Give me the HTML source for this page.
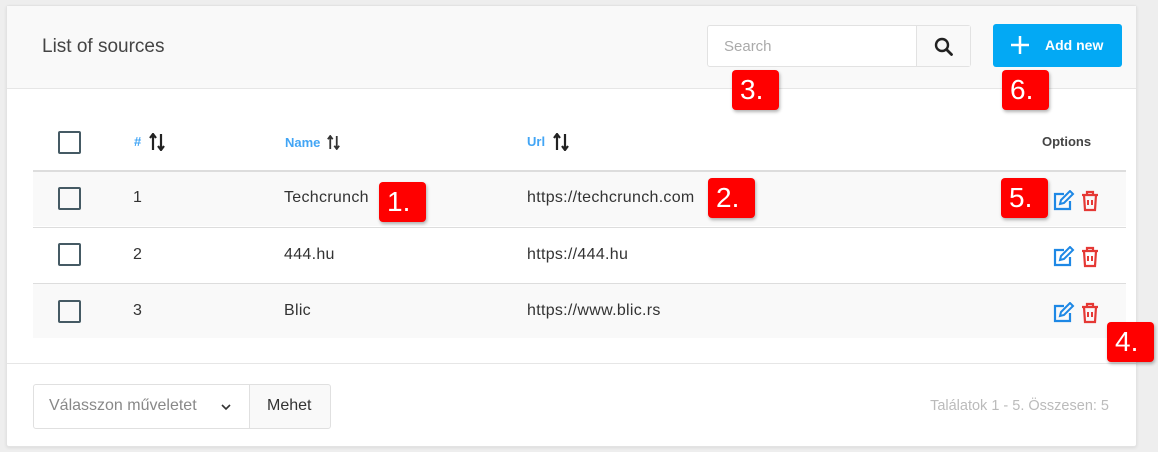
<!DOCTYPE html>
<html><head><meta charset="utf-8"><style>
*{box-sizing:border-box;margin:0;padding:0}
body{width:1158px;height:452px;background:#eeeeee;font-family:"Liberation Sans",sans-serif;position:relative;overflow:hidden}
.card{position:absolute;left:6px;top:5px;width:1131px;height:442px;background:#fff;border:1px solid #e3e3e3;border-radius:3px;box-shadow:0 1px 3px rgba(0,0,0,.08)}
.hdr{position:absolute;left:0;top:0;width:100%;height:83px;background:#f9f9f9;border-bottom:1px solid #e6e6e6}
.title{position:absolute;left:35px;top:30px;font-size:19px;color:#444}
.search{position:absolute;left:700px;top:19px;width:264px;height:42px;background:#fff;border:1px solid #e2e2e2;border-radius:3px}
.search span{position:absolute;left:16px;top:12px;font-size:15px;color:#aaa}
.search .btn{position:absolute;left:208px;top:0;width:54px;height:40px;border-left:1px solid #e2e2e2;background:#f9f9f9}
.add{position:absolute;left:986px;top:18px;width:129px;height:43px;background:#03a9f4;border-radius:3px;color:#fff;font-weight:bold;font-size:14px}
.add span{position:absolute;left:52px;top:13px}
.abs{position:absolute}
.cb{position:absolute;width:23px;height:23px;border:2px solid #455a64;border-radius:2px}
.row{position:absolute;left:26px;width:1093px;height:56px;border-top:1px solid #ddd}
.t{position:absolute;font-size:16px;letter-spacing:.3px;color:#333}
.h{position:absolute;font-size:13px;font-weight:bold;color:#42a5f5}
.badge{position:absolute;background:#f00;color:#fff;font-size:28px;border-radius:4px;width:47px;height:40px;padding-left:8px;line-height:40px;box-shadow:1px 2px 3px rgba(0,0,0,.3)}
.foot{position:absolute;left:0;top:357px;width:100%;border-top:1px solid #e6e6e6}
</style></head><body>
<div class="card">
 <div class="hdr">
  <div class="title">List of sources</div>
  <div class="search"><span>Search</span><div class="btn">
   <svg class="abs" style="left:17px;top:11px" width="20" height="20" viewBox="0 0 20 20"><circle cx="8" cy="8" r="6" fill="none" stroke="#222" stroke-width="2.4"/><line x1="12.5" y1="12.5" x2="17.5" y2="17.5" stroke="#222" stroke-width="2.8" stroke-linecap="round"/></svg>
  </div></div>
  <div class="add"><svg class="abs" style="left:18px;top:12px" width="18" height="18"><path d="M9 0v18M0 9h18" stroke="#fff" stroke-width="2.5"/></svg><span>Add new</span></div>
 </div>
 <div class="cb" style="left:51px;top:125px"></div>
 <div class="h" style="left:127px;top:128px">#</div>
 <svg class="abs" style="left:142px;top:127px" width="16" height="18" viewBox="0 0 16 18"><path d="M4 17V2M1 5l3-4 3 4M12 1v15M9 13l3 4 3-4" stroke="#222" stroke-width="2.2" fill="none"/></svg>
 <div class="h" style="left:278px;top:129px">Name</div>
 <svg class="abs" style="left:320px;top:129px" width="13" height="15" viewBox="0 0 16 18"><path d="M4 17V2M1 5l3-4 3 4M12 1v15M9 13l3 4 3-4" stroke="#333" stroke-width="2.2" fill="none"/></svg>
 <div class="h" style="left:520px;top:128px">Url</div>
 <svg class="abs" style="left:546px;top:127px" width="16" height="18" viewBox="0 0 16 18"><path d="M4 17V2M1 5l3-4 3 4M12 1v15M9 13l3 4 3-4" stroke="#222" stroke-width="2.2" fill="none"/></svg>
 <div class="abs" style="left:1035px;top:128px;font-size:13px;font-weight:bold;color:#444">Options</div>

 <div class="row" style="top:164px;background:#f9f9f9;border-top:2px solid #ddd"></div>
 <div class="row" style="top:221px;background:#fff"></div>
 <div class="row" style="top:277px;background:#f9f9f9;height:55px"></div>

 <div class="cb" style="left:51px;top:181px"></div><div class="t" style="left:126px;top:183px">1</div><div class="t" style="left:277px;top:183px">Techcrunch</div><div class="t" style="left:520px;top:183px">https://techcrunch.com</div>
 <div class="cb" style="left:51px;top:237px"></div><div class="t" style="left:126px;top:240px">2</div><div class="t" style="left:277px;top:240px">444.hu</div><div class="t" style="left:520px;top:240px">https://444.hu</div>
 <div class="cb" style="left:51px;top:294px"></div><div class="t" style="left:126px;top:296px">3</div><div class="t" style="left:277px;top:296px">Blic</div><div class="t" style="left:520px;top:296px">https://www.blic.rs</div>

 <svg class="abs" style="left:1046px;top:184px" width="50" height="22" viewBox="0 0 50 22"><path d="M11 4H2v15h15v-8" fill="none" stroke="#1e88e5" stroke-width="2.2"/><path d="M7 14l1-4 9-9 3 3-9 9z" fill="none" stroke="#1e88e5" stroke-width="2"/><path d="M29 5h16M34 5V2h6v3M31 5l1 15h10l1-15" fill="none" stroke="#e53935" stroke-width="2.2"/><path d="M35 10v5M39 10v5" stroke="#e53935" stroke-width="2"/></svg>
 <svg class="abs" style="left:1046px;top:240px" width="50" height="22" viewBox="0 0 50 22"><path d="M11 4H2v15h15v-8" fill="none" stroke="#1e88e5" stroke-width="2.2"/><path d="M7 14l1-4 9-9 3 3-9 9z" fill="none" stroke="#1e88e5" stroke-width="2"/><path d="M29 5h16M34 5V2h6v3M31 5l1 15h10l1-15" fill="none" stroke="#e53935" stroke-width="2.2"/><path d="M35 10v5M39 10v5" stroke="#e53935" stroke-width="2"/></svg>
 <svg class="abs" style="left:1046px;top:296px" width="50" height="22" viewBox="0 0 50 22"><path d="M11 4H2v15h15v-8" fill="none" stroke="#1e88e5" stroke-width="2.2"/><path d="M7 14l1-4 9-9 3 3-9 9z" fill="none" stroke="#1e88e5" stroke-width="2"/><path d="M29 5h16M34 5V2h6v3M31 5l1 15h10l1-15" fill="none" stroke="#e53935" stroke-width="2.2"/><path d="M35 10v5M39 10v5" stroke="#e53935" stroke-width="2"/></svg>

 <div class="foot"></div>
 <div class="abs" style="left:26px;top:378px;width:217px;height:45px;border:1px solid #e0e0e0;border-radius:3px 0 0 3px;background:#fff"><span class="abs" style="left:15px;top:12px;font-size:16px;color:#888">Válasszon műveletet</span><svg class="abs" style="left:187px;top:19px" width="10" height="7"><path d="M1 1l4 4 4-4" stroke="#333" stroke-width="1.6" fill="none"/></svg></div>
 <div class="abs" style="left:242px;top:378px;width:82px;height:45px;border:1px solid #e0e0e0;border-radius:0 3px 3px 0;background:#f9f9f9"><span class="abs" style="left:17px;top:12px;font-size:16px;color:#333">Mehet</span></div>
 <div class="abs" style="right:27px;top:392px;font-size:14.5px;color:#bbb">Találatok 1 - 5. Összesen: 5</div>

 <div class="badge" style="left:372px;top:176px">1.</div>
 <div class="badge" style="left:701px;top:172px">2.</div>
 <div class="badge" style="left:725px;top:64px">3.</div>
 <div class="badge" style="left:995px;top:64px">6.</div>
 <div class="badge" style="left:994px;top:172px">5.</div>
 <div class="badge" style="left:1100px;top:316px">4.</div>
</div>
</body></html>
